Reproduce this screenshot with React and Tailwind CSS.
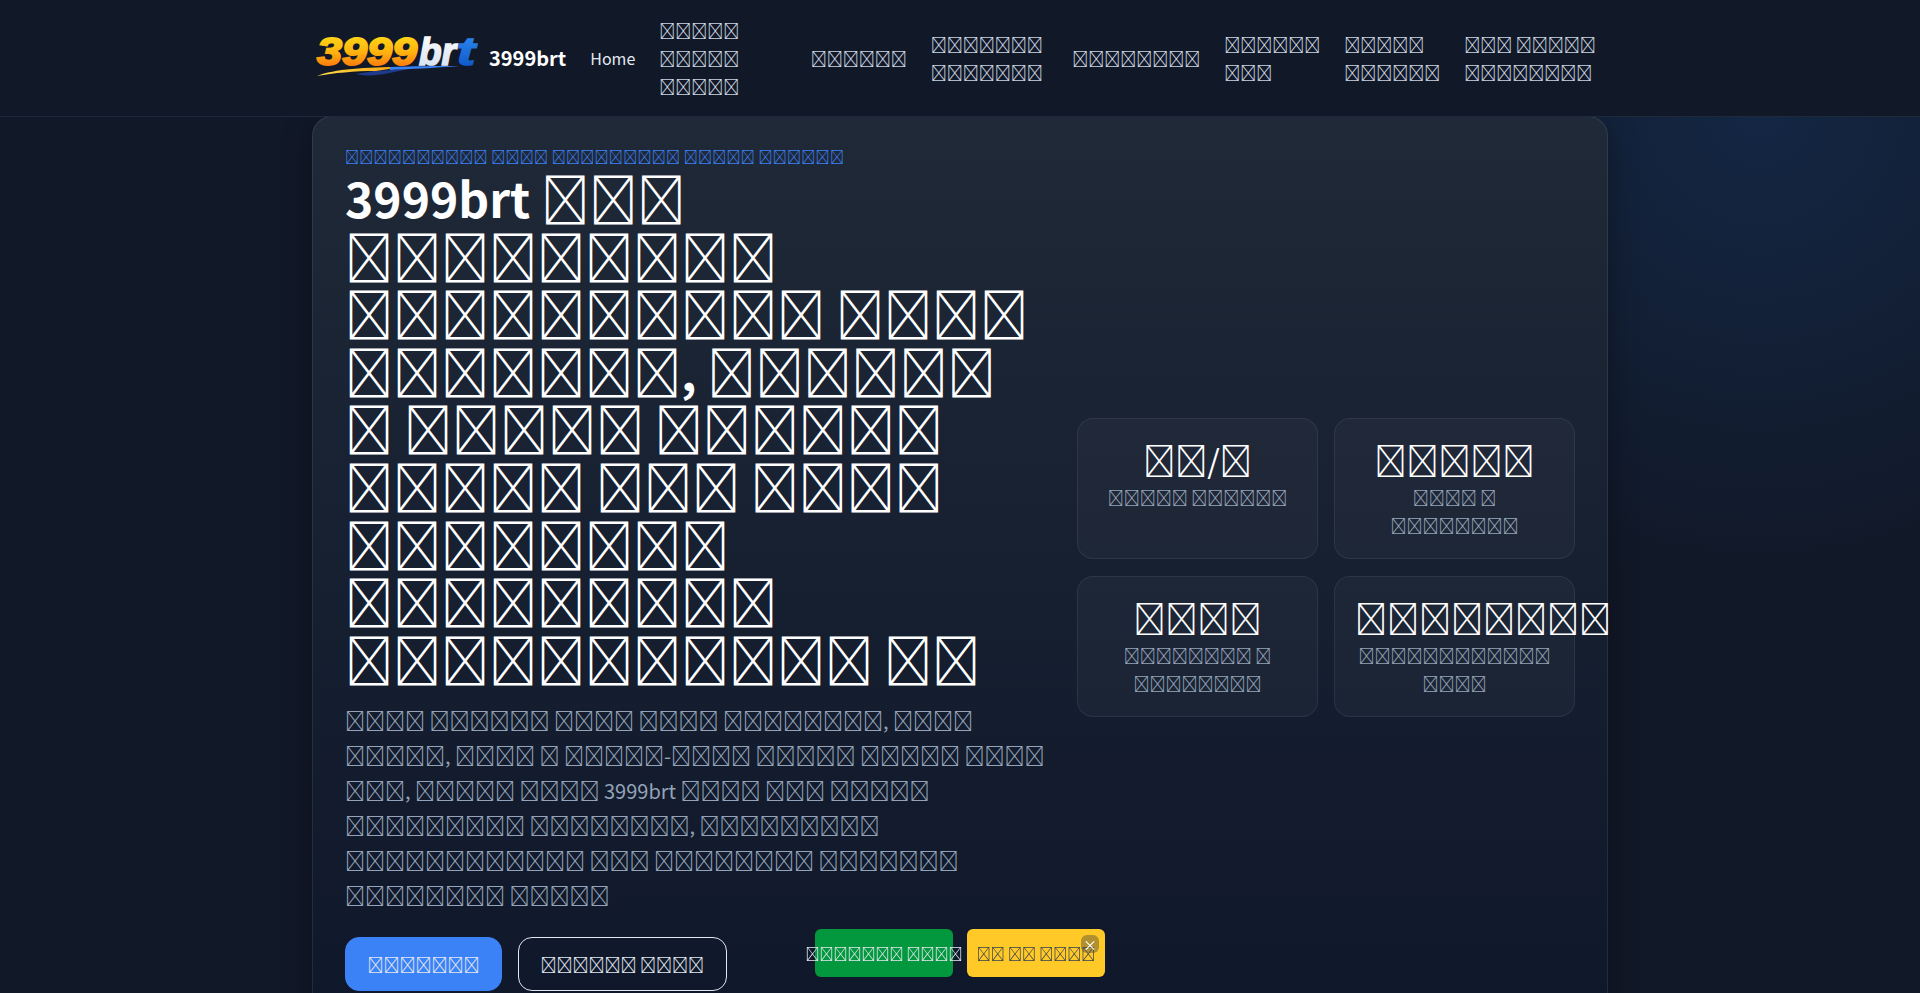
import React from "react";

// the reference shows missing-glyph boxes, "#" stands for one box
const t = (s) => s.replace(/#/g, "\uE000");

const navItems = [
  "##### ##### #####",
  "######",
  "####### #######",
  "########",
  "###### ###",
  "##### ######",
  "### ##### ########",
];

const stats = [
  { value: "##/#", label: "##### ######" },
  { value: "#####", label: "#### # ########" },
  { value: "####", label: "######## # ########" },
  { value: "########", label: "############ ####" },
];

const Logo = () => (
  <svg width="164" height="44" viewBox="0 0 164 44" className="shrink-0">
    <defs>
      <linearGradient id="gold" x1="0" y1="0" x2="0" y2="1">
        <stop offset="0" stopColor="#ffe11a" />
        <stop offset="0.5" stopColor="#ffb30f" />
        <stop offset="1" stopColor="#f8620c" />
      </linearGradient>
      <linearGradient id="silver" x1="0" y1="0" x2="0" y2="1">
        <stop offset="0" stopColor="#ffffff" />
        <stop offset="1" stopColor="#d3deef" />
      </linearGradient>
      <linearGradient id="blue" x1="0" y1="0" x2="0" y2="1">
        <stop offset="0" stopColor="#2f8df5" />
        <stop offset="1" stopColor="#0a4fc0" />
      </linearGradient>
      <linearGradient id="swoosh" x1="0" y1="0" x2="1" y2="0">
        <stop offset="0" stopColor="#ffdc4a" />
        <stop offset="1" stopColor="#f59e0b" />
      </linearGradient>
    </defs>
    <text x="3" y="29" textLength="100" lengthAdjust="spacingAndGlyphs" fontFamily="'Liberation Sans', sans-serif" fontWeight="700" fontStyle="italic" fontSize="38" fill="url(#gold)" stroke="url(#gold)" strokeWidth="2">
      3999
    </text>
    <text x="105" y="29" textLength="37" lengthAdjust="spacingAndGlyphs" fontFamily="'Liberation Sans', sans-serif" fontWeight="700" fontStyle="italic" fontSize="38" fill="url(#silver)" stroke="url(#silver)" strokeWidth="1.6">
      br
    </text>
    <text x="143" y="29" textLength="18" lengthAdjust="spacingAndGlyphs" fontFamily="'Liberation Sans', sans-serif" fontWeight="700" fontStyle="italic" fontSize="38" fill="url(#blue)" stroke="url(#blue)" strokeWidth="1.6">
      t
    </text>
    <path d="M42 38 C58 42 76 37 94 33 L60 35 Z" fill="#1e3a8a" />
    <path d="M3 40 C20 33 52 31 88 31 L62 35 C40 35 20 37 3 40 Z" fill="url(#swoosh)" />
    <path d="M76 31 C100 30 125 30 146 30 C118 32 96 33 76 34 Z" fill="#3b82f6" />
  </svg>
);

export default function App() {
  return (
    <div className="min-h-screen bg-[#111827] bg-[radial-gradient(circle_480px_at_1760px_110px,rgba(30,90,170,0.22),transparent)] font-['Noto_Sans_CJK_SC',sans-serif] text-[16px] leading-[28px] text-[#cbd5e1]">
      {/* Header */}
      <header className="relative border-b border-[#1e293b] bg-[#111827]">
        <div className="mx-auto flex w-[1296px] items-center gap-6 pl-[2px] pr-[8px] py-4">
          <div className="flex shrink-0 items-center gap-[11px]">
            <Logo />
            <span className="text-[20px] font-bold text-white">3999brt</span>
          </div>
          <nav className="flex min-w-0 flex-1 items-center gap-6">
            <a className="text-[#e2e8f0]">Home</a>
            {navItems.map((item, i) => (
              <a key={i}>{t(item)}</a>
            ))}
          </nav>
        </div>
      </header>

      {/* Hero */}
      <main className="mx-auto w-[1296px]">
        <section className="-mt-px grid grid-cols-[701px_1fr] items-center gap-[31px] rounded-[20px] border border-[rgba(148,163,184,0.15)] bg-linear-to-b from-[#1f2937] to-[#0f172a] px-8 pb-8 pt-[26px] shadow-[0_10px_30px_rgba(0,0,0,0.35)]">
          <div>
            <p className="text-[14px] leading-[26px] tracking-[0.02em] text-[#3b82f6]">{t("########## #### ######### ##### ######")}</p>
            <h1 className="mb-4 text-[48px] font-bold leading-[1.2] text-white">
              {t("3999brt ### ######### ########## #### #######, ###### # ##### ###### ##### ### #### ######## ######### ########### ##")}
            </h1>
            <p className="text-[20px] leading-[35px] text-[#94a3b8]">
              {t("#### ###### #### #### ########, #### #####, #### # #####-#### ##### ##### #### ###, ##### #### 3999brt #### ### ##### ######### ########, ######### ############ ### ######## ####### ######## #####")}
            </p>
            <div className="mt-6 flex gap-4">
              <a className="rounded-[14px] border border-[#3b82f6] bg-[#3b82f6] px-[21.5px] py-3 text-[#e2e8f0]">{t("#######")}</a>
              <a className="rounded-[14px] border border-[#e2e8f0] px-[21.5px] py-3 text-[#e2e8f0]">{t("###### ####")}</a>
            </div>
          </div>

          <div className="mt-px grid grid-cols-2 gap-x-4 gap-y-[17px]">
            {stats.map((stat, i) => (
              <div
                key={i}
                className="rounded-2xl border border-[rgba(148,163,184,0.12)] bg-[rgba(255,255,255,0.03)] px-5 pb-[19px] pt-[18px] text-center"
              >
                <div className="mb-[2px] text-[32px] leading-[44px] text-white">{t(stat.value)}</div>
                <div className="text-[#94a3b8]">{t(stat.label)}</div>
              </div>
            ))}
          </div>
        </section>
      </main>

      {/* Floating actions */}
      <div className="fixed bottom-4 left-1/2 flex -translate-x-1/2 gap-[14px]">
        <a className="flex h-12 w-[138px] items-center justify-center whitespace-nowrap rounded-md bg-[#03983e] text-[14px] text-[#e2e8f0]">{t("####### ####")}</a>
        <a className="flex h-12 w-[138px] items-center justify-center whitespace-nowrap rounded-md bg-[#ffc928] text-[14px] text-[#374151]">{t("## ## ####")}</a>
        <button className="absolute right-[6px] top-[6px] flex h-[18px] w-[18px] items-center justify-center rounded-md bg-[rgba(60,60,60,0.4)] text-[14px] leading-none text-white">×</button>
      </div>
    </div>
  );
}
